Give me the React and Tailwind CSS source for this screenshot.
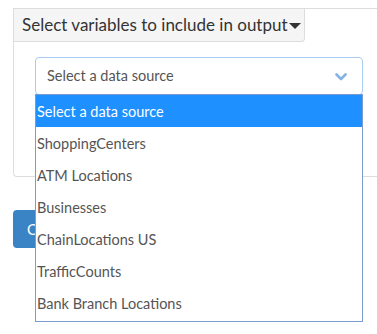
const sources = [
  'ShoppingCenters',
  'ATM Locations',
  'Businesses',
  'ChainLocations US',
  'TrafficCounts',
  'Bank Branch Locations',
]

export default function App() {
  return (
    <div className="relative h-[334px] w-[377px] overflow-hidden bg-white pl-[13px] pt-[8px] font-['Lato',sans-serif] text-[#555]">
      <div className="-mr-4 h-[169px] rounded-bl-[4px] border-b border-l border-t border-[#ddd]">
        <div className="flex h-[33px] w-[291px] items-center whitespace-nowrap rounded-br-[4px] border-b border-r border-[#ddd] bg-[#f5f5f5] pl-[8px] text-[17px] text-[#333]">
          Select variables to include in output
          <span className="ml-[1px] mt-[1px] inline-block h-0 w-0 border-l-[6px] border-r-[6px] border-t-[6px] border-l-transparent border-r-transparent border-t-[#333]" />
        </div>
        <div className="pl-[21px] pt-[15px]">
          <div className="relative w-[328px]">
            <div className="flex h-[38px] items-center justify-between rounded-[4px] border border-[#a9cdf2] bg-white pl-[11px] pr-[15px] text-[14.5px]">
              <span>Select a data source</span>
              <svg width="12" height="8" viewBox="0 0 12 8" className="mt-[2px]">
                <polyline points="1.5,1.5 6,6 10.5,1.5" fill="none" stroke="#86b3e6" strokeWidth="2.6" strokeLinecap="round" strokeLinejoin="round" />
              </svg>
            </div>
            <div className="absolute left-0 top-[37px] z-10 w-[328px] border border-[#7b9bd1] bg-white pb-[2px] text-[14.5px]">
              <div className="flex h-[32px] items-center bg-[#1e90ff] pl-[1px] pt-[1px] text-white">Select a data source</div>
              {sources.map((s) => (
                <div key={s} className="flex h-[32px] items-center pl-[1px] pt-[1px]">
                  {s}
                </div>
              ))}
            </div>
          </div>
        </div>
      </div>
      <div className="mt-[33px] flex h-[38px] w-[22px] items-center overflow-hidden rounded-l-[4px] bg-[#3a84c5] pl-[14px] text-[15px] text-white">
        C
      </div>
    </div>
  )
}
